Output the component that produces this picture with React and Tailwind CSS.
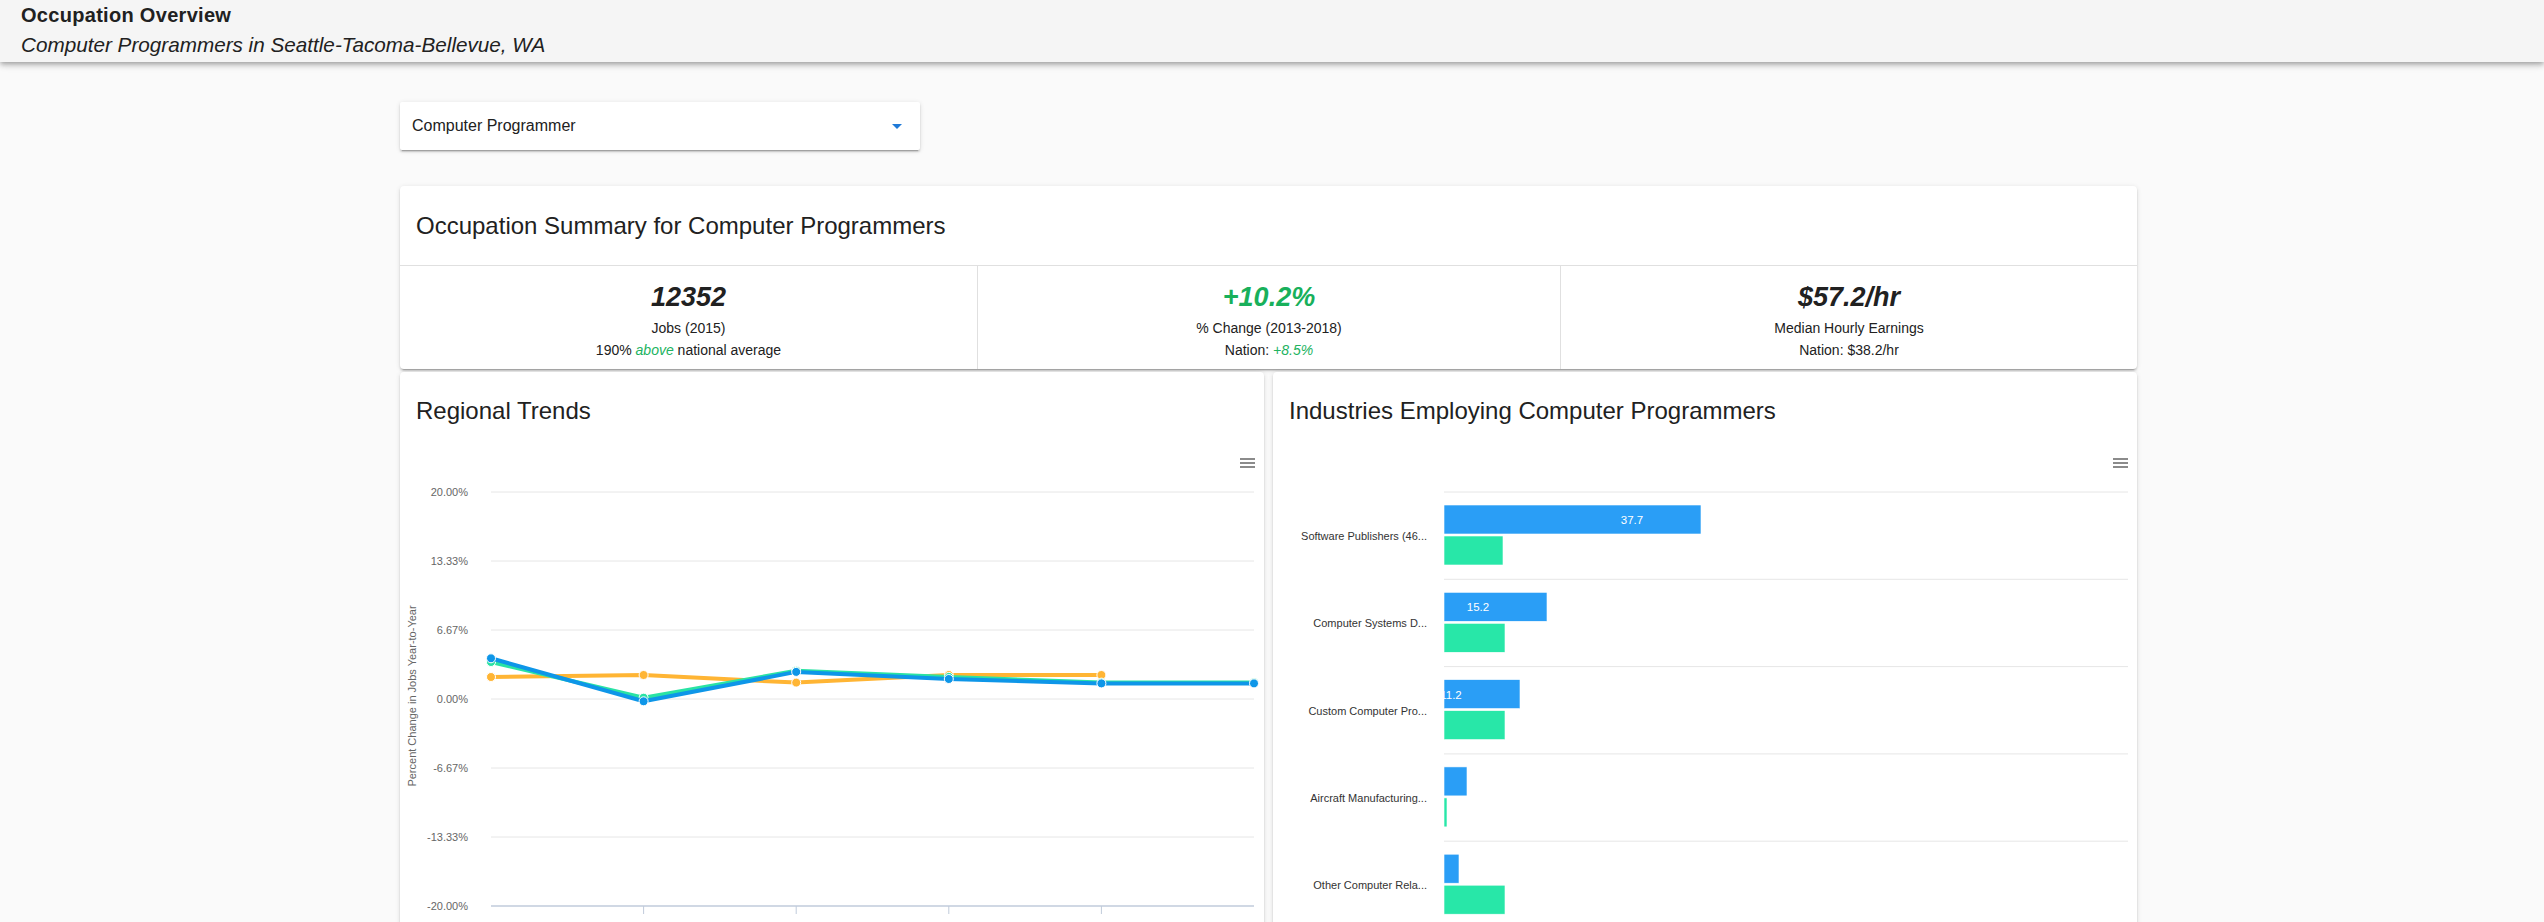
import React from "react";

const cardShadow =
  "shadow-[0_3px_1px_-2px_rgba(0,0,0,0.2),0_2px_2px_0_rgba(0,0,0,0.14),0_1px_5px_0_rgba(0,0,0,0.12)]";

function Hamburger() {
  return (
    <path
      d="M840 9 H855 M840 13 H855 M840 17 H855"
      stroke="#666"
      strokeWidth="1.6"
      fill="none"
    />
  );
}

function RegionalChart() {
  const yLabels = ["20.00%", "13.33%", "6.67%", "0.00%", "-6.67%", "-13.33%", "-20.00%"];
  const xs = [91, 243.6, 396.2, 548.8, 701.4, 854];
  const orange = [227, 225, 232.6, 225, 225];
  const green = [212, 247.7, 220.8, 226.9, 232.6, 232.6];
  const blue = [208.3, 251.3, 221.9, 229, 233.4, 233.4];
  const series = [
    { c: "#ffb534", d: orange },
    { c: "#2ae3a4", d: green },
    { c: "#0e96e8", d: blue },
  ];
  return (
    <svg width="864" height="530" className="block" fontFamily="'Liberation Sans', Arial, sans-serif">
      <Hamburger />
      {yLabels.map((l, i) => {
        const y = 42 + i * 69;
        return (
          <g key={l}>
            <line x1="91" x2="854" y1={y} y2={y} stroke={i === 6 ? "#c0cbdb" : "#e6e6e6"} strokeWidth={i === 6 ? 1.5 : 1} />
            <text x="68" y={y + 4} textAnchor="end" fontSize="11" fill="#666">
              {l}
            </text>
          </g>
        );
      })}
      {[243.6, 396.2, 548.8, 701.4].map((x) => (
        <line key={x} x1={x} x2={x} y1="456" y2="464" stroke="#c0cbdb" strokeWidth="1" />
      ))}
      <text
        transform="translate(16,246) rotate(-90)"
        textAnchor="middle"
        fontSize="11"
        fill="#666"
      >
        Percent Change in Jobs Year-to-Year
      </text>
      {series.map((s, si) => (
        <g key={si}>
          <polyline
            points={s.d.map((y, i) => `${xs[i]},${y}`).join(" ")}
            fill="none"
            stroke={s.c}
            strokeWidth="4"
            strokeLinejoin="round"
            strokeLinecap="round"
          />
          {s.d.map((y, i) => (
            <circle key={i} cx={xs[i]} cy={y} r="4.5" fill={s.c} stroke="#fff" strokeWidth="1" />
          ))}
        </g>
      ))}
    </svg>
  );
}

function IndustriesChart() {
  const cats = [
    { label: "Software Publishers (46...", b: 257, g: 59, v: "37.7" },
    { label: "Computer Systems D...", b: 103, g: 61, v: "15.2" },
    { label: "Custom Computer Pro...", b: 76, g: 61, v: "11.2" },
    { label: "Aircraft Manufacturing...", b: 23, g: 3 },
    { label: "Other Computer Rela...", b: 15, g: 61 },
  ];
  const step = 87.3;
  return (
    <svg width="864" height="530" className="block" fontFamily="'Liberation Sans', Arial, sans-serif">
      <defs>
        <clipPath id="plotclip">
          <rect x="171" y="0" width="684" height="530" />
        </clipPath>
      </defs>
      <Hamburger />
      {[0, 1, 2, 3, 4, 5].map((i) => (
        <line
          key={i}
          x1="171"
          x2="855"
          y1={42 + i * step}
          y2={42 + i * step}
          stroke="#e6e6e6"
          strokeWidth="1"
        />
      ))}
      {cats.map((c, i) => {
        const top = 42 + i * step;
        return (
          <g key={c.label}>
            <text x="154" y={top + 48} textAnchor="end" fontSize="11" fill="#333">
              {c.label}
            </text>
            <rect x="171" y={top + 13} width={c.b} height="29" fill="#2a9ef6" stroke="#fff" strokeWidth="0.6" />
            <rect x="171" y={top + 44} width={c.g} height="29" fill="#28e7a8" stroke="#fff" strokeWidth="0.6" />
            {c.v && (
              <text
                x={171 + c.b - 69}
                y={top + 32}
                textAnchor="middle"
                fontSize="11.5"
                fill="#fff"
                clipPath="url(#plotclip)"
              >
                {c.v}
              </text>
            )}
          </g>
        );
      })}
    </svg>
  );
}

function Stat({ value, valueClass, label, sub, first }) {
  return (
    <div className={`flex flex-col items-center pt-[15px] pb-[8px] ${first ? "" : "border-l border-[#e0e0e0]"}`}>
      <div className={`text-[27px] leading-[32px] font-bold italic ${valueClass}`}>{value}</div>
      <div className="mt-[4px] text-[14px] leading-[22px] text-[#212121]">{label}</div>
      <div className="text-[14px] leading-[22px] text-[#212121]">{sub}</div>
    </div>
  );
}

export default function App() {
  return (
    <div className="min-h-screen bg-[#fafafa] font-['Liberation_Sans',Arial,sans-serif] text-[#212121] overflow-hidden">
      <header className="relative z-10 h-[62px] bg-[#f5f5f5] px-[21px] pt-[1px] shadow-[0_2px_4px_-1px_rgba(0,0,0,0.2),0_4px_5px_0_rgba(0,0,0,0.14),0_1px_10px_0_rgba(0,0,0,0.12)]">
        <div className="text-[20px] leading-[29px] font-bold tracking-[0.3px]">Occupation Overview</div>
        <div className="text-[20.7px] leading-[29px] italic">
          Computer Programmers in Seattle-Tacoma-Bellevue, WA
        </div>
      </header>

      <main className="ml-[400px] w-[1737px] pt-[40px]">
        <div className={`flex h-[48px] w-[520px] items-center justify-between rounded-[2px] bg-white pl-[12px] pr-[18px] ${cardShadow}`}>
          <span className="text-[16px] text-[#212121]">Computer Programmer</span>
          <svg width="10" height="5" viewBox="0 0 10 5">
            <path d="M0 0 H10 L5 5 Z" fill="#1f7ad8" />
          </svg>
        </div>

        <section className={`mt-[36px] rounded-[4px] bg-white ${cardShadow}`}>
          <div className="flex h-[80px] items-center border-b border-[#e0e0e0] px-[16px]">
            <h2 className="text-[24px] font-normal text-[#212121]">
              Occupation Summary for Computer Programmers
            </h2>
          </div>
          <div className="grid grid-cols-[577px_583px_577px]">
            <Stat
              first
              value="12352"
              valueClass="text-[#212121]"
              label="Jobs (2015)"
              sub={
                <>
                  190% <span className="italic text-[#22b35f]">above</span> national average
                </>
              }
            />
            <Stat
              value="+10.2%"
              valueClass="text-[#18b05b]"
              label="% Change (2013-2018)"
              sub={
                <>
                  Nation: <span className="italic text-[#22b35f]">+8.5%</span>
                </>
              }
            />
            <Stat
              value="$57.2/hr"
              valueClass="text-[#212121]"
              label="Median Hourly Earnings"
              sub="Nation: $38.2/hr"
            />
          </div>
        </section>

        <div className="mt-[3px] grid grid-cols-2 gap-[9px]">
          <section className={`rounded-[4px] bg-white ${cardShadow}`}>
            <div className="flex h-[78px] items-center px-[16px]">
              <h3 className="text-[24px] font-normal text-[#212121]">Regional Trends</h3>
            </div>
            <RegionalChart />
          </section>
          <section className={`rounded-[4px] bg-white ${cardShadow}`}>
            <div className="flex h-[78px] items-center px-[16px]">
              <h3 className="text-[24px] font-normal text-[#212121]">
                Industries Employing Computer Programmers
              </h3>
            </div>
            <IndustriesChart />
          </section>
        </div>
      </main>
    </div>
  );
}
